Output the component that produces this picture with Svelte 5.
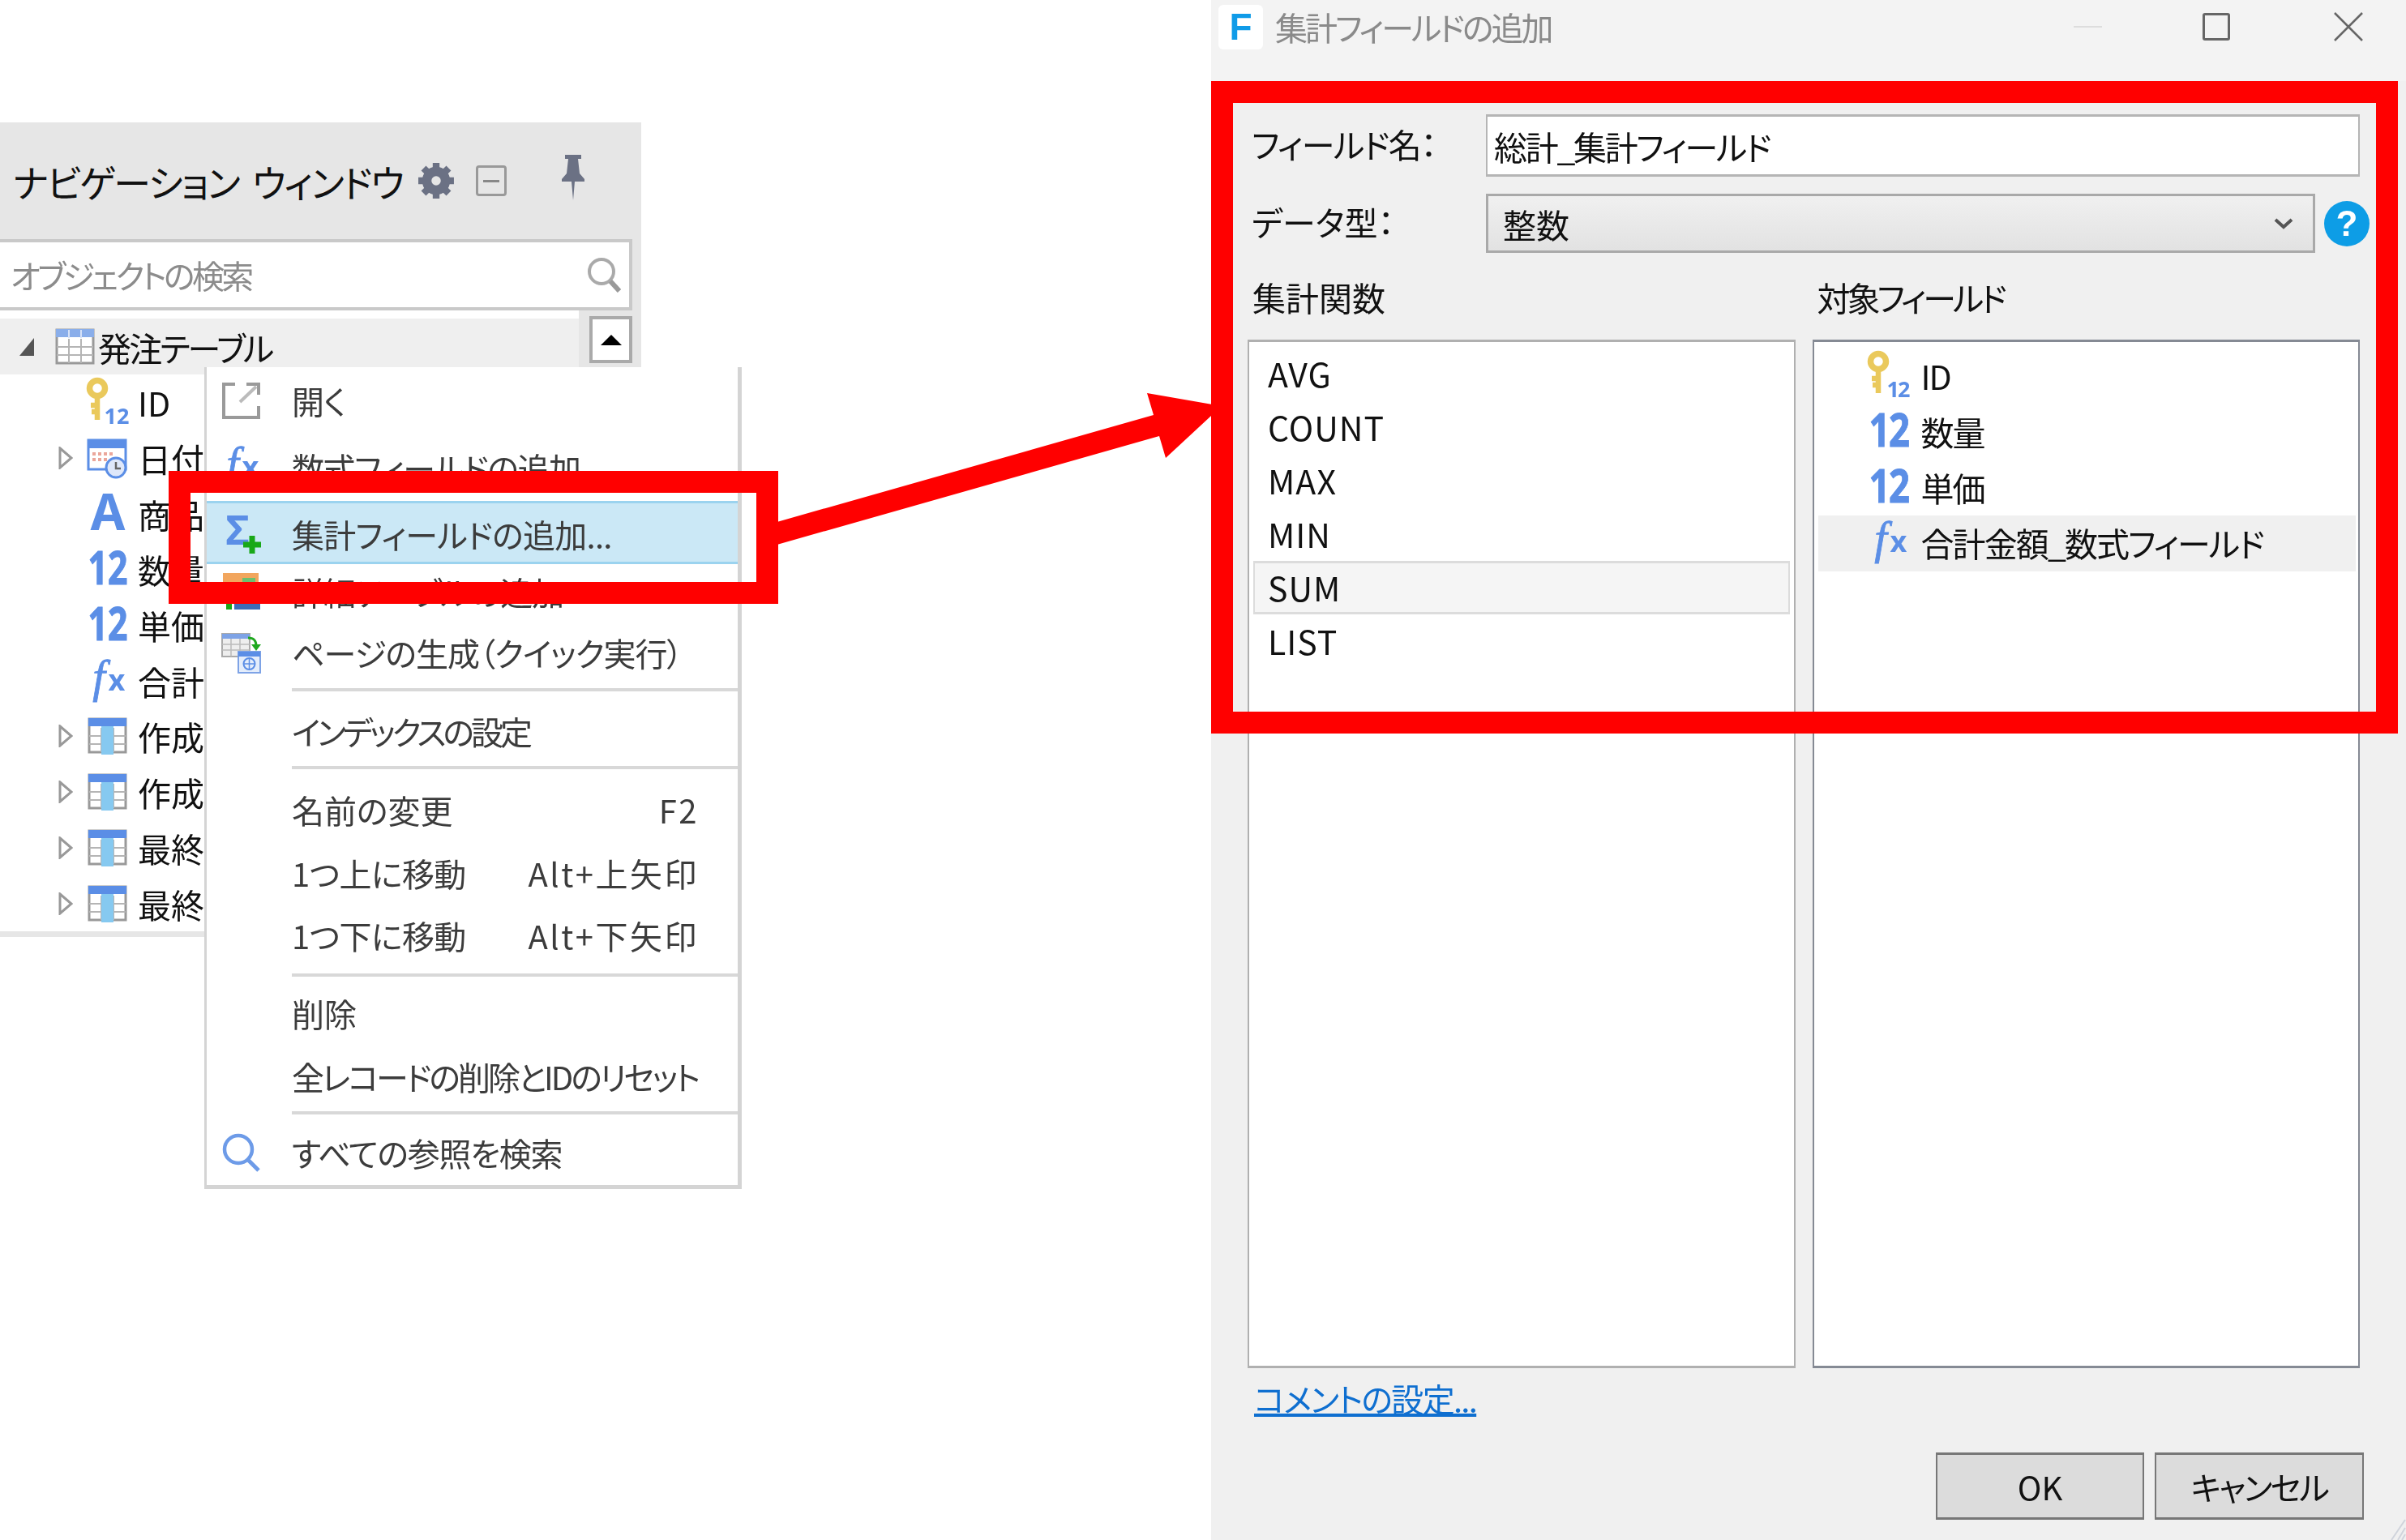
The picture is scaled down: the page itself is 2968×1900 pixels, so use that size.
<script>
    const treeRows = [
        { icon: "key", label: "ID" },
        { icon: "calendar", label: "日付", expandable: true },
        { icon: "text", label: "商品名" },
        { icon: "num", label: "数量" },
        { icon: "num", label: "単価" },
        { icon: "fx", label: "合計金額" },
        { icon: "table", label: "作成日", expandable: true },
        { icon: "table", label: "作成者", expandable: true },
        { icon: "table", label: "最終更新日", expandable: true },
        { icon: "table", label: "最終更新者", expandable: true },
    ];

    // row heights and tracking differ per row in the screenshot, so they live with the data
    const menuRows = [
        { icon: "open", label: "開く", h: 82, ls: -0.5 },
        { icon: "fxmenu", label: "数式フィールドの追加...", h: 83, ls: -1.5 },
        { icon: "sigma", label: "集計フィールドの追加...", h: 78, ls: -0.7, active: true },
        { icon: "detail", label: "詳細テーブルの追加", h: 68, ls: -1 },
        { icon: "page", label: "ページの生成（クイック実行）", h: 82, ls: -1 },
        { sep: true, before: 3, after: 10 },
        { label: "インデックスの設定", h: 78, ls: -4 },
        { sep: true, before: 4, after: 11 },
        { label: "名前の変更", key: "F2", h: 78, ls: 0 },
        { label: "1つ上に移動", key: "Alt+上矢印", h: 77, ls: -0.6 },
        { label: "1つ下に移動", key: "Alt+下矢印", h: 78, ls: -0.6 },
        { sep: true, before: 8, after: 6 },
        { label: "削除", h: 78, ls: 0 },
        { label: "全レコードの削除とIDのリセット", h: 78, ls: -3 },
        { sep: true, before: 4, after: 8 },
        { icon: "find", label: "すべての参照を検索", h: 78, ls: -1.3 },
    ];

    const aggregates = ["AVG", "COUNT", "MAX", "MIN", "SUM", "LIST"];

    const targets = [
        { icon: "key", label: "ID" },
        { icon: "num", label: "数量" },
        { icon: "num", label: "単価" },
        { icon: "fx", label: "合計金額_数式フィールド", hover: true },
    ];
</script>

{#snippet icon(kind)}
    <svg class="ico" viewBox="0 0 50 50" aria-hidden="true">
        {#if kind === "key"}
            <circle cx="12" cy="8" r="9.5" fill="none" stroke="#eac95c" stroke-width="7.5" />
            <path d="M12 16V47M12 29H4M12 37H5" fill="none" stroke="#eac95c" stroke-width="6.5" />
            <text x="36" y="52" class="small12">12</text>
        {:else if kind === "calendar"}
            <rect x="1" y="3" width="46" height="36" fill="#fff" stroke="#5b8ee6" stroke-width="3" />
            <rect x="1" y="3" width="46" height="10" fill="#5b8ee6" />
            <path d="M6 20h26M6 27h20" stroke="#eba79b" stroke-width="4" stroke-dasharray="4 3" />
            <circle cx="35" cy="37" r="12" fill="#dfe8fa" stroke="#5b8ee6" stroke-width="3" />
            <path d="M35 30v8h6" fill="none" stroke="#666" stroke-width="2.5" />
        {:else if kind === "text"}
            <text x="25" y="45" class="glyph big">A</text>
        {:else if kind === "num"}
            <text x="25" y="44" class="glyph num" textLength="49" lengthAdjust="spacingAndGlyphs">12</text>
        {:else if kind === "fx" || kind === "fxmenu"}
            <text x="14" y="39" class="fx-f">f</text>
            <text x="36" y="37" class="fx-x">x</text>
        {:else if kind === "table" || kind === "tablehead"}
            <rect x="2" y="4" width="45" height="41" fill="#fff" stroke="#999" stroke-width="3" />
            <path d="M2 25H47M2 35H47M17 15V45M32 15V45" stroke="#b5b5b5" stroke-width="2" />
            {#if kind === "table"}
                <rect x="17" y="12" width="15" height="36" fill="#86c9f0" />
                <rect x="1" y="3" width="47" height="10" fill="#5b8ee6" />
            {:else}
                <rect x="1" y="3" width="47" height="10" fill="#8aaeea" />
                <path d="M17 4V14M32 4V14" stroke="#d7e2f7" stroke-width="2" />
            {/if}
        {:else if kind === "open"}
            <path d="M17 5H3V46H46V32M31 5H46V18" fill="none" stroke="#9a9a9a" stroke-width="4" />
            <path d="M23 27L43 8" stroke="#bbb" stroke-width="4" />
        {:else if kind === "sigma"}
            <text x="20" y="38" class="glyph sigma">Σ</text>
            <path d="M38 27V49M27 38H49" stroke="#19a818" stroke-width="7" />
        {:else if kind === "detail"}
            <rect x="2" y="2" width="44" height="14" fill="#f2a65e" />
            <rect x="26" y="8" width="16" height="10" fill="#6cc070" />
            <rect x="16" y="40" width="32" height="7" fill="#3d6cb8" />
            <rect x="6" y="40" width="7" height="7" fill="#19a818" />
        {:else if kind === "page"}
            <rect x="1" y="2" width="34" height="28" fill="#eee" stroke="#aaa" stroke-width="2" />
            <rect x="1" y="2" width="34" height="6" fill="#7ea3e6" />
            <path d="M1 15H35M1 22H35M12 8V30M23 8V30" stroke="#bbb" stroke-width="1.5" />
            <path d="M33 7C41 7 43 11 43 17" fill="none" stroke="#1fa81f" stroke-width="3" />
            <path d="M37 15H49L43 23Z" fill="#1fa81f" />
            <rect x="21" y="24" width="27" height="26" fill="#e4edfb" stroke="#7ea3e6" stroke-width="2" />
            <rect x="21" y="24" width="27" height="6" fill="#5b8ee6" />
            <circle cx="34.5" cy="39" r="7" fill="none" stroke="#5b8ee6" stroke-width="2" />
            <path d="M27.5 39h14M34.5 32v14" stroke="#5b8ee6" stroke-width="1.5" />
        {:else if kind === "find"}
            <circle cx="21" cy="21" r="17" fill="none" stroke="#6d9be8" stroke-width="4.5" />
            <path d="M33 34L46 47" stroke="#6d9be8" stroke-width="5" />
        {/if}
    </svg>
{/snippet}

{#snippet expander(open)}
    <svg class="expander" viewBox="0 0 18 28" aria-hidden="true">
        {#if open}
            <path d="M18 3V25H0Z" fill="#555" />
        {:else}
            <path d="M2 2L16 14L2 26Z" fill="#fff" stroke="#999" stroke-width="3" />
        {/if}
    </svg>
{/snippet}

<div class="page">
    <section class="left">
        <div class="panel">
            <header class="panel-head">
                <h2>ナビゲーション ウィンドウ</h2>
                <svg class="gear" viewBox="0 0 44 44" aria-hidden="true">
                    <path d="M22 12V1M22 43V32M12 22H1M43 22H32M14.9 14.9L7.2 7.2M36.8 36.8L29.1 29.1M29.1 14.9L36.8 7.2M7.2 36.8L14.9 29.1" stroke="#6b7184" stroke-width="8" />
                    <circle cx="22" cy="22" r="11" fill="none" stroke="#6b7184" stroke-width="11" />
                </svg>
                <span class="collapse"><i></i></span>
                <svg class="pin" viewBox="0 0 28 56" aria-hidden="true">
                    <path d="M4 0H24V5H20L22 23L28 30V33H16L14 56L12 33H0V30L6 23L8 5H4Z" fill="#6b7184" />
                </svg>
            </header>
            <div class="search">
                <span>オブジェクトの検索</span>
                <svg viewBox="0 0 42 44" aria-hidden="true">
                    <circle cx="18" cy="18" r="15" fill="none" stroke="#aaa" stroke-width="4" />
                    <path d="M29 30L40 42" stroke="#999" stroke-width="6" />
                </svg>
            </div>
            <div class="tree-wrap">
                <div class="tree">
                    <div class="tree-root">
                        {@render expander(true)}
                        <span class="root-ico">{@render icon("tablehead")}</span>
                        <span class="root-label">発注テーブル</span>
                    </div>
                    {#each treeRows as row}
                        <div class="tree-row">
                            <span class="slot">{#if row.expandable}{@render expander(false)}{/if}</span>
                            {@render icon(row.icon)}
                            <span class="tree-label">{row.label}</span>
                        </div>
                    {/each}
                </div>
                <div class="scroll">
                    <button class="up" aria-label="上へ"></button>
                </div>
            </div>
        </div>

        <div class="menu">
            {#each menuRows as row}
                {#if row.sep}
                    <div class="sep" style="margin-top:{row.before}px;margin-bottom:{row.after}px"></div>
                {:else}
                    <div class="menu-row" class:active={row.active} style="height:{row.h}px">
                        <span class="menu-ico">{#if row.icon}{@render icon(row.icon)}{/if}</span>
                        <span class="menu-label" style="letter-spacing:{row.ls}px">{row.label}</span>
                        {#if row.key}<span class="menu-key">{row.key}</span>{/if}
                    </div>
                {/if}
            {/each}
        </div>
    </section>

    <section class="dialog">
        <header class="titlebar">
            <span class="app-ico"><b>F</b></span>
            <span class="title">集計フィールドの追加</span>
            <span class="win-min"></span>
            <span class="win-max"></span>
            <svg class="win-close" viewBox="0 0 36 36" aria-hidden="true">
                <path d="M1 1L35 35M35 1L1 35" stroke="#666" stroke-width="2.5" />
            </svg>
        </header>

        <div class="body">
            <div class="form-row name-row">
                <span class="lbl tight">フィールド名：</span>
                <input class="field" value="総計_集計フィールド" readonly />
            </div>
            <div class="form-row type-row">
                <span class="lbl">データ型：</span>
                <div class="select">
                    <span>整数</span>
                    <svg viewBox="0 0 24 14" aria-hidden="true">
                        <path d="M2 2L12 11L22 2" fill="none" stroke="#555" stroke-width="4" />
                    </svg>
                </div>
                <span class="help">?</span>
            </div>

            <div class="columns">
                <div class="col">
                    <div class="col-title">集計関数</div>
                    <div class="list">
                        {#each aggregates as fn}
                            <div class="fn" class:picked={fn === "SUM"}>{fn}</div>
                        {/each}
                    </div>
                </div>
                <div class="col">
                    <div class="col-title narrow">対象フィールド</div>
                    <div class="list dark">
                        {#each targets as t}
                            <div class="target" class:hover={t.hover}>
                                {@render icon(t.icon)}
                                <span>{t.label}</span>
                            </div>
                        {/each}
                    </div>
                </div>
            </div>

            <a class="comment" href="#comment">コメントの設定...</a>

            <div class="actions">
                <button class="ok">OK</button>
                <button class="cancel">キャンセル</button>
            </div>
        </div>

        <svg class="grip" viewBox="0 0 22 27" aria-hidden="true">
            <path d="M21 2L4 27M21 12L12 27M21 20L17 27" stroke="#d0d4dc" stroke-width="2" />
        </svg>
    </section>

    <!-- red annotations drawn over the two pasted screenshots -->
    <div class="mark mark-menu"></div>
    <div class="mark mark-dialog"></div>
    <svg class="arrow" viewBox="0 0 2968 1900" aria-hidden="true">
        <path d="M955 645L1423 512L1415 485L1507 501L1438 565L1430 538L955 673Z" fill="#ff0000" />
    </svg>
</div>

<style>
    :global(body) {
        margin: 0;
        background: #fff;
    }

    .page {
        position: relative;
        display: flex;
        width: 2968px;
        height: 1900px;
        overflow: hidden;
        font-family: "Noto Sans CJK JP", "Noto Sans", sans-serif;
        font-feature-settings: "palt";
        color: #111;
    }

    .left {
        position: relative;
        width: 1494px;
        padding-top: 151px;
        box-sizing: border-box;
        flex: none;
    }

    /* the reference is an enlarged screenshot, its interface is soft but the red marks are not */
    .panel,
    .menu,
    .dialog {
        filter: blur(0.6px);
    }

    .panel {
        width: 791px;
    }

    .panel-head {
        display: flex;
        align-items: center;
        height: 144px;
        padding-left: 16px;
        box-sizing: border-box;
        background: #e6e6e6;
    }

    .panel-head h2 {
        margin: 0;
        width: 499px;
        font-size: 46px;
        font-weight: 400;
        letter-spacing: -2px;
        word-spacing: 8px;
        white-space: nowrap;
    }

    .gear {
        width: 46px;
        height: 46px;
    }

    .collapse {
        display: flex;
        align-items: center;
        justify-content: center;
        width: 38px;
        height: 38px;
        margin-left: 26px;
        box-sizing: border-box;
        border: 3px solid #999;
        border-radius: 4px;
    }

    .collapse i {
        width: 20px;
        height: 3px;
        background: #888;
    }

    .pin {
        width: 28px;
        height: 56px;
        margin: -8px 0 0 68px;
    }

    .search {
        display: flex;
        align-items: center;
        justify-content: space-between;
        width: 780px;
        height: 88px;
        padding: 0 10px 0 13px;
        box-sizing: border-box;
        background: #fff;
        border: 4px solid #c9c9c9;
        border-left: 0;
        font-size: 40px;
        letter-spacing: -3.6px;
        color: #8c8c8c;
        box-shadow: 11px 0 0 #e6e6e6;
    }

    .search svg {
        width: 42px;
        height: 44px;
    }

    .tree-wrap {
        display: flex;
        border-bottom: 7px solid #e6e6e6;
    }

    .tree {
        width: 714px;
        padding-top: 10px;
        flex: none;
        font-size: 41px;
    }

    .tree-root {
        display: flex;
        align-items: center;
        height: 69px;
        padding-left: 24px;
        background: #efefef;
    }

    .root-ico {
        display: flex;
        margin: 0 3px 0 26px;
    }

    .root-label {
        letter-spacing: -2.8px;
    }

    .tree-row {
        display: flex;
        align-items: center;
        height: 68.7px;
        padding-left: 72px;
        white-space: nowrap;
    }

    .slot {
        display: flex;
        width: 36px;
        flex: none;
    }

    .tree-label {
        margin-left: 12px;
    }

    .expander {
        width: 18px;
        height: 28px;
    }

    .ico {
        width: 50px;
        height: 50px;
        flex: none;
        overflow: visible;
    }

    .ico text {
        font-family: "Noto Sans", sans-serif;
        text-anchor: middle;
        fill: #5b8ee6;
    }

    .ico .small12 {
        font-size: 27px;
        font-weight: 700;
    }

    .ico .glyph {
        font-weight: 700;
    }

    .ico .big {
        font-size: 62px;
    }

    .ico .num {
        font-size: 58px;
        stroke: #5b8ee6;
        stroke-width: 1px;
    }

    .ico .fx-f {
        font-family: "Liberation Serif", serif;
        font-style: italic;
        font-size: 56px;
        stroke: #5b8ee6;
        stroke-width: 0.8px;
    }

    .ico .fx-x {
        font-size: 36px;
        font-weight: 700;
    }

    .ico .sigma {
        font-size: 50px;
    }

    .scroll {
        flex: 1;
        background: #e6e6e6;
        padding: 7px 0 0 13px;
    }

    .up {
        display: flex;
        align-items: center;
        justify-content: center;
        width: 53px;
        height: 58px;
        padding: 0;
        background: #fff;
        border: 4px solid #aaa;
    }

    .up::before {
        content: "";
        border-left: 13px solid transparent;
        border-right: 13px solid transparent;
        border-bottom: 13px solid #000;
    }

    .menu {
        position: absolute;
        left: 252px;
        top: 453px;
        width: 663px;
        height: 1014px;
        box-sizing: border-box;
        background: #fff;
        border-left: 3px solid #d4d4d4;
        border-right: 5px solid #d4d4d4;
        border-bottom: 5px solid #d4d4d4;
        font-size: 40px;
        color: #3c3c3c;
    }

    .menu-row {
        display: flex;
        align-items: center;
        box-sizing: border-box;
        padding-right: 48px;
        white-space: nowrap;
    }

    .menu-row.active {
        padding-top: 3px;
        background: #cbe8f6;
        border-top: 3px solid #9bd3ef;
        border-bottom: 3px solid #9bd3ef;
    }

    .menu-ico {
        display: flex;
        width: 50px;
        margin: 0 37px 0 18px;
        flex: none;
    }

    .menu-key {
        margin-left: auto;
        letter-spacing: 2.5px;
    }

    .sep {
        height: 4px;
        margin-left: 105px;
        background: #d8d8d8;
    }

    .dialog {
        position: relative;
        display: flex;
        flex-direction: column;
        width: 1474px;
        flex: none;
        background: #f0f0f0;
    }

    .titlebar {
        display: flex;
        align-items: center;
        height: 100px;
        padding: 0 53px 34px 9px;
        box-sizing: border-box;
        background: #f3f3f3;
    }

    .app-ico {
        display: flex;
        align-items: center;
        justify-content: center;
        width: 55px;
        height: 55px;
        background: #fff;
        border-radius: 6px;
        font-family: "Liberation Sans", sans-serif;
        font-size: 46px;
        color: #0f9be8;
    }

    .title {
        margin-left: 15px;
        font-size: 40px;
        letter-spacing: -3px;
        color: #8a8a8a;
    }

    .win-min {
        width: 35px;
        height: 2px;
        margin-left: auto;
        background: #ddd;
    }

    .win-max {
        width: 34px;
        height: 34px;
        margin-left: 124px;
        box-sizing: border-box;
        border: 3px solid #666;
        border-radius: 3px;
    }

    .win-close {
        width: 36px;
        height: 36px;
        margin-left: 128px;
    }

    .body {
        display: flex;
        flex-direction: column;
        flex: 1;
        padding: 41px 57px 25px 45px;
        font-size: 41px;
    }

    .form-row {
        display: flex;
        align-items: center;
    }

    .lbl {
        width: 294px;
        padding-left: 5px;
        box-sizing: border-box;
        flex: none;
        margin-top: -6px;
    }

    .lbl.tight {
        letter-spacing: -1.5px;
    }

    .name-row {
        height: 77px;
    }

    .type-row {
        height: 73px;
        margin-top: 21px;
    }

    .field {
        flex: 1;
        min-width: 0;
        height: 77px;
        padding: 0 8px;
        box-sizing: border-box;
        background: #fff;
        border: 2px solid #b5b5b5;
        border-top-width: 3px;
        border-bottom-width: 3px;
        outline: none;
        border-radius: 0;
        font: inherit;
        font-feature-settings: inherit;
        letter-spacing: -2.3px;
        color: #111;
    }

    .select {
        display: flex;
        align-items: center;
        justify-content: space-between;
        width: 1023px;
        height: 73px;
        padding: 0 24px 0 18px;
        box-sizing: border-box;
        flex: none;
        background: linear-gradient(#f0f0f0, #e2e2e2);
        border: 3px solid #a9a9a9;
    }

    .select svg {
        width: 24px;
        height: 14px;
    }

    .help {
        display: flex;
        align-items: center;
        justify-content: center;
        width: 56px;
        height: 56px;
        margin: 0 -12px 0 11px;
        flex: none;
        background: #0d9de6;
        border-radius: 50%;
        font-family: "Liberation Sans", sans-serif;
        font-size: 44px;
        font-weight: 700;
        color: #fff;
    }

    .columns {
        display: flex;
        gap: 21px;
        margin-top: 24px;
    }

    .col {
        flex: 1;
        min-width: 0;
    }

    .col-title {
        height: 83px;
        padding: 0 0 0 6px;
        line-height: 60px;
    }

    .col-title.narrow {
        letter-spacing: -4px;
    }

    .list {
        height: 1269px;
        padding: 6px 5px 0;
        box-sizing: border-box;
        background: #fff;
        border: 2px solid #b0b0b0;
        border-top-width: 3px;
        border-bottom-width: 3px;
    }

    .list.dark {
        border-color: #858a94;
        padding: 8px 3px 0 5px;
    }

    .fn {
        display: flex;
        align-items: center;
        height: 66px;
        padding: 0 0 3px 18px;
        box-sizing: border-box;
        letter-spacing: 1px;
    }

    .fn.picked {
        background: #f5f5f5;
        border: 2px solid #dcdcdc;
        border-top-width: 3px;
        border-bottom-width: 3px;
        padding-left: 16px;
    }

    .target {
        display: flex;
        align-items: center;
        height: 68.7px;
        padding: 0 0 2px 62px;
        box-sizing: border-box;
        gap: 15px;
        letter-spacing: -1.9px;
    }

    .target.hover {
        background: #f0f0f0;
    }

    .comment {
        align-self: flex-start;
        margin: 10px 0 0 8px;
        font-size: 40px;
        line-height: 54px;
        letter-spacing: -1.7px;
        color: #0f6fd0;
        text-decoration: underline;
    }

    .actions {
        display: flex;
        justify-content: flex-end;
        gap: 13px;
        margin: 40px -5px 0 0;
    }

    .actions button {
        height: 83px;
        padding: 0;
        background: #dcdcdc;
        border: 2px solid #777;
        border-top-width: 3px;
        border-bottom-width: 3px;
        font: inherit;
        font-feature-settings: inherit;
        font-size: 40px;
        color: #111;
    }

    .ok {
        width: 257px;
    }

    .cancel {
        width: 258px;
        letter-spacing: -2.5px;
    }

    .grip {
        position: absolute;
        right: 0;
        bottom: 0;
        width: 22px;
        height: 27px;
    }

    .mark {
        position: absolute;
        box-sizing: border-box;
        border: 27px solid #ff0000;
    }

    .mark-menu {
        left: 208px;
        top: 581px;
        width: 752px;
        height: 164px;
    }

    .mark-dialog {
        left: 1494px;
        top: 100px;
        width: 1464px;
        height: 805px;
    }

    .arrow {
        position: absolute;
        left: 0;
        top: 0;
        width: 2968px;
        height: 1900px;
        pointer-events: none;
    }
</style>
